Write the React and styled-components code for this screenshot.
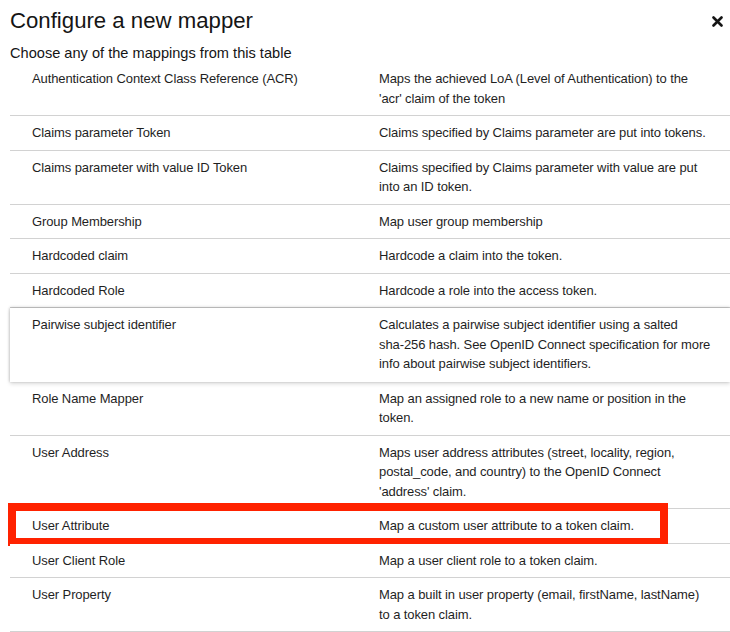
import React from "react";
import styled, { createGlobalStyle } from "styled-components";

const Global = createGlobalStyle`
  html, body { margin: 0; padding: 0; background: #fff; }
  body { font-family: "Liberation Sans", Arial, sans-serif; color: #151515; }
`;

const Page = styled.div`
  width: 730px;
  height: 632px;
  overflow: hidden;
  padding: 8px 0 0 10px;
  box-sizing: border-box;
`;

const Header = styled.div`
  display: flex;
  align-items: center;
  justify-content: space-between;
  padding-right: 7px;
`;

const Title = styled.h1`
  margin: 0;
  font-size: 22.2px;
  line-height: 26px;
  font-weight: 400;
  color: #151515;
`;

const CloseButton = styled.button`
  border: 0;
  background: none;
  padding: 0;
  width: 12px;
  height: 12px;
  display: flex;
  align-items: center;
  justify-content: center;
  color: #151515;
`;

const Subtitle = styled.p`
  margin: 11px 0 0;
  font-size: 14.6px;
  line-height: 16px;
  color: #151515;
`;

const Table = styled.div`
  display: flex;
  flex-direction: column;
  margin-top: 1px;
`;

const Row = styled.div`
  position: relative;
  display: grid;
  grid-template-columns: 347px 1fr;
  padding: 7px 16px 7px 22px;
  border-bottom: 1px solid #d2d2d2;
  font-size: 13px;
  line-height: 19.5px;
  color: #1f1f1f;
  background: #fff;
  ${(p) =>
    p.$hovered &&
    `
    z-index: 1;
    border-bottom-color: transparent;
    box-shadow: 0 -1px 3px rgba(3,3,3,0.14), 0 2px 4px rgba(3,3,3,0.14), -1px 0 2px rgba(3,3,3,0.08);
  `}
`;

const Cell = styled.div`
  letter-spacing: -0.1px;
`;

const Highlight = styled.div`
  position: absolute;
  left: -2px;
  top: -6px;
  width: 660px;
  height: 43px;
  border: 8px solid #ff2200;
  box-sizing: border-box;
  pointer-events: none;
`;

const rows = [
  ["Authentication Context Class Reference (ACR)", ["Maps the achieved LoA (Level of Authentication) to the", "'acr' claim of the token"]],
  ["Claims parameter Token", ["Claims specified by Claims parameter are put into tokens."]],
  ["Claims parameter with value ID Token", ["Claims specified by Claims parameter with value are put", "into an ID token."]],
  ["Group Membership", ["Map user group membership"]],
  ["Hardcoded claim", ["Hardcode a claim into the token."]],
  ["Hardcoded Role", ["Hardcode a role into the access token."]],
  ["Pairwise subject identifier", ["Calculates a pairwise subject identifier using a salted", "sha-256 hash. See OpenID Connect specification for more", "info about pairwise subject identifiers."], "hover"],
  ["Role Name Mapper", ["Map an assigned role to a new name or position in the", "token."]],
  ["User Address", ["Maps user address attributes (street, locality, region,", "postal_code, and country) to the OpenID Connect", "'address' claim."]],
  ["User Attribute", ["Map a custom user attribute to a token claim."], "highlight"],
  ["User Client Role", ["Map a user client role to a token claim."]],
  ["User Property", ["Map a built in user property (email, firstName, lastName)", "to a token claim."]],
];

export default function App() {
  return (
    <>
      <Global />
      <Page>
        <Header>
          <Title>Configure a new mapper</Title>
          <CloseButton aria-label="Close">
            <svg width="11" height="11" viewBox="0 0 11 11">
              <path d="M1.5 1.5 L9.5 9.5 M9.5 1.5 L1.5 9.5" stroke="#151515" strokeWidth="2.6" strokeLinecap="round" />
            </svg>
          </CloseButton>
        </Header>
        <Subtitle>Choose any of the mappings from this table</Subtitle>
        <Table>
          {rows.map(([name, desc, flag]) => (
            <Row key={name} $hovered={flag === "hover"}>
              <Cell>{name}</Cell>
              <Cell>
                {desc.map((line, i) => (
                  <React.Fragment key={i}>
                    {i > 0 && <br />}
                    {line}
                  </React.Fragment>
                ))}
              </Cell>
              {flag === "highlight" && <Highlight />}
            </Row>
          ))}
        </Table>
      </Page>
    </>
  );
}
